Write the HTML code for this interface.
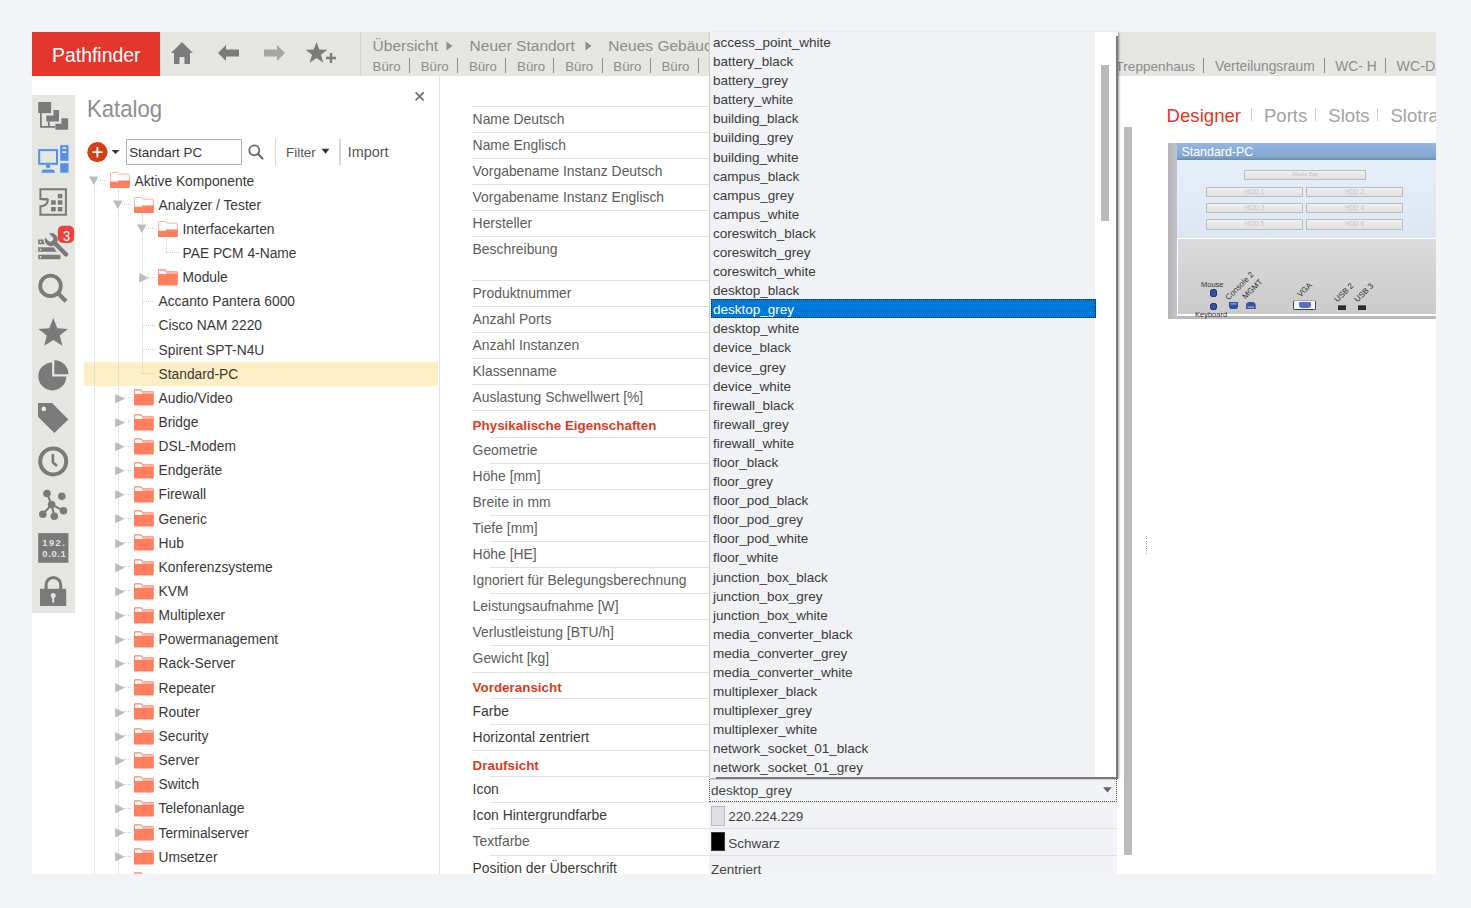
<!DOCTYPE html><html><head><meta charset="utf-8"><style>

html,body{margin:0;padding:0}
body{width:1471px;height:908px;overflow:hidden;position:relative;background:#f3f4f8;font-family:"Liberation Sans", sans-serif;}
.abs{position:absolute}
.t{position:absolute;white-space:nowrap;line-height:1}
svg{position:absolute;overflow:visible}

</style></head><body>
<div class="abs" style="left:32px;top:32px;width:1404px;height:842px;background:#fff;"></div>
<div class="abs" style="left:32px;top:32px;width:128px;height:44px;background:#e3362d;"></div>
<div class="abs" style="left:160px;top:32px;width:1276px;height:44px;background:#e5e5e1;"></div>
<div class="t" style="left:52.10px;top:46.00px;font-size:19.4px;color:#fff;font-weight:normal;">Pathfinder</div>
<svg style="left:170px;top:41px" width="24" height="24" viewBox="0 0 24 24"><path d="M12 1 L23 12 L20 12 L20 23 L14.5 23 L14.5 16 L9.5 16 L9.5 23 L4 23 L4 12 L1 12 Z" fill="#7b7b7b"/></svg>
<svg style="left:217px;top:44px" width="23" height="18" viewBox="0 0 23 18"><path d="M1 9 L9 1 L9 5.5 L22 5.5 L22 12.5 L9 12.5 L9 17 Z" fill="#7b7b7b"/></svg>
<svg style="left:263px;top:44px" width="23" height="18" viewBox="0 0 23 18"><path d="M22 9 L14 1 L14 5.5 L1 5.5 L1 12.5 L14 12.5 L14 17 Z" fill="#a5a5a5"/></svg>
<svg style="left:305px;top:41px" width="33" height="24" viewBox="0 0 33 24"><path d="M11.5 1 L14.3 8.6 L22.5 8.8 L16 13.8 L18.4 21.8 L11.5 17.1 L4.6 21.8 L7 13.8 L0.5 8.8 L8.7 8.6 Z" fill="#7b7b7b"/><path d="M26 12 V22 M21 17 H31" stroke="#7b7b7b" stroke-width="2.4"/></svg>
<div class="abs" style="left:360px;top:32px;width:1px;height:44px;background:#d2d2ce;"></div>
<div class="t" style="left:372.60px;top:38.00px;font-size:15.5px;color:#8c8c8c;font-weight:normal;">Übersicht</div>
<svg style="left:446px;top:41px" width="7" height="10" viewBox="0 0 7 10"><path d="M0.5 0.5 L6.5 5 L0.5 9.5Z" fill="#8c8c8c"/></svg>
<div class="t" style="left:469.60px;top:38.00px;font-size:15.5px;color:#8c8c8c;font-weight:normal;">Neuer Standort</div>
<svg style="left:585px;top:41px" width="7" height="10" viewBox="0 0 7 10"><path d="M0.5 0.5 L6.5 5 L0.5 9.5Z" fill="#8c8c8c"/></svg>
<div class="t" style="left:608.30px;top:38.00px;font-size:15.5px;color:#8c8c8c;font-weight:normal;">Neues Gebäude</div>
<div class="t" style="left:372.60px;top:60.00px;font-size:13.25px;color:#8c8c8c;font-weight:normal;">Büro</div>
<div class="abs" style="left:409px;top:58px;width:1px;height:15px;background:#8c8c8c;"></div>
<div class="t" style="left:420.75px;top:60.00px;font-size:13.25px;color:#8c8c8c;font-weight:normal;">Büro</div>
<div class="abs" style="left:457px;top:58px;width:1px;height:15px;background:#8c8c8c;"></div>
<div class="t" style="left:468.90px;top:60.00px;font-size:13.25px;color:#8c8c8c;font-weight:normal;">Büro</div>
<div class="abs" style="left:505px;top:58px;width:1px;height:15px;background:#8c8c8c;"></div>
<div class="t" style="left:517.05px;top:60.00px;font-size:13.25px;color:#8c8c8c;font-weight:normal;">Büro</div>
<div class="abs" style="left:553px;top:58px;width:1px;height:15px;background:#8c8c8c;"></div>
<div class="t" style="left:565.20px;top:60.00px;font-size:13.25px;color:#8c8c8c;font-weight:normal;">Büro</div>
<div class="abs" style="left:602px;top:58px;width:1px;height:15px;background:#8c8c8c;"></div>
<div class="t" style="left:613.35px;top:60.00px;font-size:13.25px;color:#8c8c8c;font-weight:normal;">Büro</div>
<div class="abs" style="left:650px;top:58px;width:1px;height:15px;background:#8c8c8c;"></div>
<div class="t" style="left:661.50px;top:60.00px;font-size:13.25px;color:#8c8c8c;font-weight:normal;">Büro</div>
<div class="abs" style="left:698px;top:58px;width:1px;height:15px;background:#8c8c8c;"></div>
<div class="abs" style="left:1118px;top:32px;width:318px;height:44px;overflow:hidden">

<div class="t" style="left:-2.50px;top:28.00px;font-size:13.6px;color:#8c8c8c">Treppenhaus</div>
<div class="abs" style="left:85px;top:26px;width:1px;height:15px;background:#8c8c8c"></div>
<div class="t" style="left:97.00px;top:28.00px;font-size:13.8px;color:#8c8c8c">Verteilungsraum</div>
<div class="abs" style="left:206px;top:26px;width:1px;height:15px;background:#8c8c8c"></div>
<div class="t" style="left:217.30px;top:28.00px;font-size:13.8px;color:#8c8c8c">WC- H</div>
<div class="abs" style="left:267px;top:26px;width:1px;height:15px;background:#8c8c8c"></div>
<div class="t" style="left:278.60px;top:27.00px;font-size:14.2px;color:#8c8c8c">WC-Damen</div>
</div>
<div class="abs" style="left:32px;top:95px;width:43px;height:518px;background:#e5e5e1;"></div>
<svg style="left:32px;top:95px" width="43" height="518" viewBox="32 95 43 518"><path d="M40.9 113 V126.9 H55.4 M48.8 121.4 V126.9" stroke="#7a7a7a" stroke-width="1.8" fill="none"/><rect x="38.2" y="102" width="12.9" height="11.1" fill="#7a7a7a"/><path d="M53.5 110.1 H59 V121.4 H46.3 V115.5 H53.5 Z" fill="#7a7a7a"/><path d="M61.4 118.2 H68.1 V129.7 H55.4 V123.8 H61.4 Z" fill="#7a7a7a"/><rect x="39.2" y="150.1" width="17.8" height="13.7" fill="none" stroke="#5490e6" stroke-width="2"/><rect x="46.1" y="164.8" width="4" height="3" fill="#5490e6"/><path d="M41.5 172.7 Q41.6 169.4 44.5 169.4 H51.8 Q54.7 169.4 54.8 172.7 Z" fill="#5490e6"/><rect x="60.2" y="145.2" width="8.3" height="15.6" fill="#5490e6"/><rect x="62.2" y="147.3" width="4.3" height="1.6" rx="0.8" fill="#e5e5e1"/><rect x="62.2" y="151.2" width="4.3" height="1.7" rx="0.8" fill="#e5e5e1"/><rect x="60.2" y="163.2" width="8.3" height="9.5" fill="#5490e6"/><path d="M40.4 199.1 V189.2 H65.9 V214.7 H40.4 V206.2 Q47.6 206.2 47.9 199.6 Z" fill="none" stroke="#7a7a7a" stroke-width="2"/><path d="M40.4 199.1 H47.9" stroke="#7a7a7a" stroke-width="2"/><rect x="57.8" y="193.9" width="4.6" height="4.4" fill="#7a7a7a"/><rect x="51.1" y="200.3" width="4.6" height="4.4" fill="#7a7a7a"/><rect x="57.8" y="200.3" width="4.6" height="4.4" fill="#7a7a7a"/><rect x="51.1" y="207" width="4.6" height="4.4" fill="#7a7a7a"/><rect x="57.8" y="207" width="4.6" height="4.4" fill="#7a7a7a"/><path d="M38.2 239.4 H43.3 L45 244.3 H38.2 Z" fill="#7a7a7a"/><path d="M38.2 247.3 H53.5 L56.8 251.8 H38.2 Z" fill="#7a7a7a"/><rect x="38.2" y="254.8" width="22.3" height="4.4" rx="1" fill="#7a7a7a"/><circle cx="40.6" cy="241.8" r="0.9" fill="#e5e5e1"/><circle cx="40.6" cy="249.6" r="0.9" fill="#e5e5e1"/><circle cx="40.6" cy="257" r="0.9" fill="#e5e5e1"/><g transform="translate(51.2 239.6) rotate(45)"><path d="M -5.85 -2.8 L -1.2 -2.8 A 2.8 2.8 0 0 1 -1.2 2.8 L -5.85 2.8 A 6.5 6.5 0 0 0 6.12 2.2 L 21 2.2 A 2.2 2.2 0 0 0 21 -2.2 L 6.12 -2.2 A 6.5 6.5 0 0 0 -5.85 -2.8 Z" fill="#7a7a7a" stroke="#e5e5e1" stroke-width="2.2"/><path d="M -5.85 -2.8 L -1.2 -2.8 A 2.8 2.8 0 0 1 -1.2 2.8 L -5.85 2.8 A 6.5 6.5 0 0 0 6.12 2.2 L 21 2.2 A 2.2 2.2 0 0 0 21 -2.2 L 6.12 -2.2 A 6.5 6.5 0 0 0 -5.85 -2.8 Z" fill="#7a7a7a"/></g><rect x="57.8" y="225.8" width="16.3" height="17.1" rx="5" fill="#e8433c"/><circle cx="50.5" cy="285.9" r="10.3" fill="none" stroke="#7a7a7a" stroke-width="3.8"/><path d="M58.5 293.8 L66 301.3" stroke="#7a7a7a" stroke-width="4.3"/><path d="M53.3 318 L57.4 328.2 L67.9 328.9 L59.8 335.5 L62.4 345.8 L53.3 340 L44.2 345.8 L46.8 335.5 L38.4 328.9 L49.2 328.2 Z" fill="#7a7a7a"/><path d="M52.1 362.4 A14 14 0 1 0 66.3 376.4 H52.1 Z" fill="#7a7a7a"/><path d="M54.3 360.2 A14.1 14.1 0 0 1 68.4 374.3 H54.3 Z" fill="#7a7a7a"/><path d="M38 403.1 H52 L68.4 419.4 L54.3 433.1 L38 416.8 Z" fill="#7a7a7a"/><circle cx="43.8" cy="408.9" r="2.3" fill="#e5e5e1"/><circle cx="53.2" cy="461.4" r="13" fill="none" stroke="#7a7a7a" stroke-width="4"/><path d="M52.9 454 V462.6 L57 466" fill="none" stroke="#7a7a7a" stroke-width="2.6"/><path d="M47 493.5 L51.6 504.6 L42.8 514.2 M51.6 504.6 L54.3 516 M51.6 504.6 L63.5 510.7" stroke="#7a7a7a" stroke-width="2" fill="none"/><circle cx="47" cy="493.5" r="3.8" fill="#7a7a7a"/><circle cx="61.8" cy="496.2" r="3.8" fill="#7a7a7a"/><circle cx="51.6" cy="504.6" r="3.8" fill="#7a7a7a"/><circle cx="42.8" cy="514.2" r="3.8" fill="#7a7a7a"/><circle cx="54.3" cy="516.2" r="3.8" fill="#7a7a7a"/><circle cx="63.5" cy="510.7" r="3.8" fill="#7a7a7a"/><rect x="38.2" y="533.1" width="30.2" height="29.7" fill="#7a7a7a"/><path d="M46.1 589 V584.8 A7.3 7.3 0 0 1 60.7 584.8 V589" fill="none" stroke="#7a7a7a" stroke-width="3"/><rect x="40" y="588.8" width="26.2" height="17.2" fill="#7a7a7a"/><circle cx="53.2" cy="595.6" r="2.5" fill="#e5e5e1"/><path d="M53.2 596 V602.6" stroke="#e5e5e1" stroke-width="2"/></svg>
<div class="t" style="left:62.60px;top:229.00px;font-size:14.2px;color:#fff;font-weight:normal;transform:scaleX(0.9);transform-origin:0 0">3</div>
<div class="t" style="left:42.30px;top:538.00px;font-size:9.4px;color:#e2e2e0;font-weight:bold;letter-spacing:1.45px">192.</div>
<div class="t" style="left:42.30px;top:549.00px;font-size:9.4px;color:#e2e2e0;font-weight:bold;letter-spacing:0.65px">0.0.1</div>
<div class="t" style="left:86.90px;top:97.00px;font-size:24.3px;color:#8e8e8e;font-weight:normal;transform:scaleX(0.912);transform-origin:0 0">Katalog</div>
<svg style="left:414px;top:91px" width="11" height="11" viewBox="0 0 11 11"><path d="M1.6 1.4 L9.6 9.4 M9.6 1.4 L1.6 9.4" stroke="#707070" stroke-width="1.7"/></svg>
<svg style="left:87px;top:142px" width="21" height="21" viewBox="0 0 21 21"><circle cx="10.4" cy="10.2" r="10.1" fill="#d83e12"/><path d="M10.4 5 V15.4 M5.2 10.2 H15.6" stroke="#fff" stroke-width="1.8"/></svg>
<svg style="left:111px;top:149px" width="9" height="6" viewBox="0 0 9 6"><path d="M0.5 1 H8.5 L4.5 5Z" fill="#333"/></svg>
<div class="abs" style="left:126px;top:139px;width:114px;height:24px;border:1px solid #b0b0b0;background:#fff"></div>
<div class="t" style="left:129.20px;top:146.00px;font-size:13.4px;color:#333;font-weight:normal;">Standart PC</div>
<svg style="left:248px;top:144px" width="16" height="16" viewBox="0 0 16 16"><circle cx="6.3" cy="6.3" r="5" fill="none" stroke="#6a6a6a" stroke-width="1.8"/><path d="M10 10 L14.5 14.5" stroke="#6a6a6a" stroke-width="2.2" stroke-linecap="round"/></svg>
<div class="abs" style="left:274.5px;top:139px;width:1.5px;height:26px;background:#d6d6d6;"></div>
<div class="t" style="left:286.00px;top:146.00px;font-size:13.4px;color:#555;font-weight:normal;">Filter</div>
<svg style="left:321px;top:148px" width="9" height="7" viewBox="0 0 9 7"><path d="M0.5 0.8 H8.5 L4.5 5.8Z" fill="#333"/></svg>
<div class="abs" style="left:339px;top:139px;width:1.5px;height:26px;background:#d6d6d6;"></div>
<div class="t" style="left:347.80px;top:145.00px;font-size:14.4px;color:#555;font-weight:normal;">Import</div>
<div class="abs" style="left:439px;top:76px;width:1px;height:798px;background:#e2e3e8;"></div>
<div class="abs" style="left:75px;top:168px;width:364px;height:706px;overflow:hidden">
<div class="abs" style="left:8.599999999999994px;top:194px;width:354.6px;height:24px;background:#fdeec3"></div>
<div class="abs" style="left:19.0px;top:17.0px;width:0;height:715.0px;border-left:1px dotted #cecece"></div>
<div class="abs" style="left:43.0px;top:22.0px;width:0;height:710.0px;border-left:1px dotted #cecece"></div>
<div class="abs" style="left:67.0px;top:46.0px;width:0;height:160.0px;border-left:1px dotted #cecece"></div>
<div class="abs" style="left:91.0px;top:71.0px;width:0;height:14.0px;border-left:1px dotted #cecece"></div>
<svg style="left:14.2px;top:8.0px" width="10" height="10" viewBox="0 0 10 10"><path d="M0 0.5 H9.6 L4.8 9.3Z" fill="#bdbdbd"/></svg>
<div class="abs" style="left:23.0px;top:12.0px;width:9.0px;height:0;border-top:1px dotted #cecece"></div>
<svg style="left:35.00px;top:4.40px" width="20" height="17" viewBox="0 0 20 17"><path d="M0.5 1.3 Q0.5 0.5 1.3 0.5 H7.4 L9 2.1 H18.5 Q19.3 2.1 19.3 2.9 V14 H0.5 Z" fill="#fff" stroke="#ffae99" stroke-width="1"/><path d="M0 9.8 H7.6 L8.4 8.6 H19.8 V14.9 Q19.8 16.1 18.6 16.1 H1.2 Q0 16.1 0 14.9 Z" fill="#ff7e5d"/></svg>
<div class="t" style="left:59.5px;top:7.00px;font-size:13.8px;color:#383838">Aktive Komponente</div>
<svg style="left:38.2px;top:32.2px" width="10" height="10" viewBox="0 0 10 10"><path d="M0 0.5 H9.6 L4.8 9.3Z" fill="#bdbdbd"/></svg>
<div class="abs" style="left:47.0px;top:36.0px;width:9.0px;height:0;border-top:1px dotted #cecece"></div>
<svg style="left:59.00px;top:28.55px" width="20" height="17" viewBox="0 0 20 17"><path d="M0.5 1.3 Q0.5 0.5 1.3 0.5 H7.4 L9 2.1 H18.5 Q19.3 2.1 19.3 2.9 V14 H0.5 Z" fill="#fff" stroke="#ffae99" stroke-width="1"/><path d="M0 9.8 H7.6 L8.4 8.6 H19.8 V14.9 Q19.8 16.1 18.6 16.1 H1.2 Q0 16.1 0 14.9 Z" fill="#ff7e5d"/></svg>
<div class="t" style="left:83.5px;top:31.00px;font-size:13.8px;color:#383838">Analyzer / Tester</div>
<svg style="left:62.2px;top:56.3px" width="10" height="10" viewBox="0 0 10 10"><path d="M0 0.5 H9.6 L4.8 9.3Z" fill="#bdbdbd"/></svg>
<div class="abs" style="left:71.0px;top:60.0px;width:9.0px;height:0;border-top:1px dotted #cecece"></div>
<svg style="left:83.00px;top:52.70px" width="20" height="17" viewBox="0 0 20 17"><path d="M0.5 1.3 Q0.5 0.5 1.3 0.5 H7.4 L9 2.1 H18.5 Q19.3 2.1 19.3 2.9 V14 H0.5 Z" fill="#fff" stroke="#ffae99" stroke-width="1"/><path d="M0 9.8 H7.6 L8.4 8.6 H19.8 V14.9 Q19.8 16.1 18.6 16.1 H1.2 Q0 16.1 0 14.9 Z" fill="#ff7e5d"/></svg>
<div class="t" style="left:107.5px;top:55.00px;font-size:13.8px;color:#383838">Interfacekarten</div>
<div class="abs" style="left:92.0px;top:84.0px;width:12.0px;height:0;border-top:1px dotted #cecece"></div>
<div class="t" style="left:107.5px;top:79.00px;font-size:13.8px;color:#383838">PAE PCM 4-Name</div>
<svg style="left:63.5px;top:104.8px" width="11" height="10" viewBox="0 0 11 10"><path d="M0.2 0 L9.7 4.7 L0.2 9.4Z" fill="#bdbdbd"/></svg>
<div class="abs" style="left:72.0px;top:109.0px;width:8.0px;height:0;border-top:1px dotted #cecece"></div>
<svg style="left:83.00px;top:100.70px" width="20" height="17" viewBox="0 0 20 17"><path d="M0 1.2 Q0 0.2 1 0.2 H6.8 L9 2.3 H18.8 Q19.8 2.3 19.8 3.3 V15.3 Q19.8 16.5 18.6 16.5 H1.2 Q0 16.5 0 15.3 Z" fill="#ff7e5d"/><path d="M0.9 1.4 H6.6 L8 2.8 V5 H0.9 Z" fill="#fff"/><rect x="8" y="2.6" width="11" height="2.2" fill="#ffbba8"/></svg>
<div class="t" style="left:107.5px;top:103.00px;font-size:13.8px;color:#383838">Module</div>
<div class="abs" style="left:68.0px;top:133.0px;width:12.0px;height:0;border-top:1px dotted #cecece"></div>
<div class="t" style="left:83.5px;top:127.00px;font-size:13.8px;color:#383838">Accanto Pantera 6000</div>
<div class="abs" style="left:68.0px;top:157.0px;width:12.0px;height:0;border-top:1px dotted #cecece"></div>
<div class="t" style="left:83.5px;top:151.00px;font-size:13.8px;color:#383838">Cisco NAM 2220</div>
<div class="abs" style="left:68.0px;top:181.0px;width:12.0px;height:0;border-top:1px dotted #cecece"></div>
<div class="t" style="left:83.5px;top:176.00px;font-size:13.8px;color:#383838">Spirent SPT-N4U</div>
<div class="abs" style="left:68.0px;top:205.0px;width:12.0px;height:0;border-top:1px dotted #cecece"></div>
<div class="t" style="left:83.5px;top:200.00px;font-size:13.8px;color:#383838">Standard-PC</div>
<svg style="left:39.5px;top:225.6px" width="11" height="10" viewBox="0 0 11 10"><path d="M0.2 0 L9.7 4.7 L0.2 9.4Z" fill="#bdbdbd"/></svg>
<div class="abs" style="left:48.0px;top:229.0px;width:8.0px;height:0;border-top:1px dotted #cecece"></div>
<svg style="left:59.00px;top:221.45px" width="20" height="17" viewBox="0 0 20 17"><path d="M0 1.2 Q0 0.2 1 0.2 H6.8 L9 2.3 H18.8 Q19.8 2.3 19.8 3.3 V15.3 Q19.8 16.5 18.6 16.5 H1.2 Q0 16.5 0 15.3 Z" fill="#ff7e5d"/><path d="M0.9 1.4 H6.6 L8 2.8 V5 H0.9 Z" fill="#fff"/><rect x="8" y="2.6" width="11" height="2.2" fill="#ffbba8"/></svg>
<div class="t" style="left:83.5px;top:224.00px;font-size:13.8px;color:#383838">Audio/Video</div>
<svg style="left:39.5px;top:249.7px" width="11" height="10" viewBox="0 0 11 10"><path d="M0.2 0 L9.7 4.7 L0.2 9.4Z" fill="#bdbdbd"/></svg>
<div class="abs" style="left:48.0px;top:253.0px;width:8.0px;height:0;border-top:1px dotted #cecece"></div>
<svg style="left:59.00px;top:245.60px" width="20" height="17" viewBox="0 0 20 17"><path d="M0 1.2 Q0 0.2 1 0.2 H6.8 L9 2.3 H18.8 Q19.8 2.3 19.8 3.3 V15.3 Q19.8 16.5 18.6 16.5 H1.2 Q0 16.5 0 15.3 Z" fill="#ff7e5d"/><path d="M0.9 1.4 H6.6 L8 2.8 V5 H0.9 Z" fill="#fff"/><rect x="8" y="2.6" width="11" height="2.2" fill="#ffbba8"/></svg>
<div class="t" style="left:83.5px;top:248.00px;font-size:13.8px;color:#383838">Bridge</div>
<svg style="left:39.5px;top:273.8px" width="11" height="10" viewBox="0 0 11 10"><path d="M0.2 0 L9.7 4.7 L0.2 9.4Z" fill="#bdbdbd"/></svg>
<div class="abs" style="left:48.0px;top:278.0px;width:8.0px;height:0;border-top:1px dotted #cecece"></div>
<svg style="left:59.00px;top:269.75px" width="20" height="17" viewBox="0 0 20 17"><path d="M0 1.2 Q0 0.2 1 0.2 H6.8 L9 2.3 H18.8 Q19.8 2.3 19.8 3.3 V15.3 Q19.8 16.5 18.6 16.5 H1.2 Q0 16.5 0 15.3 Z" fill="#ff7e5d"/><path d="M0.9 1.4 H6.6 L8 2.8 V5 H0.9 Z" fill="#fff"/><rect x="8" y="2.6" width="11" height="2.2" fill="#ffbba8"/></svg>
<div class="t" style="left:83.5px;top:272.00px;font-size:13.8px;color:#383838">DSL-Modem</div>
<svg style="left:39.5px;top:298.0px" width="11" height="10" viewBox="0 0 11 10"><path d="M0.2 0 L9.7 4.7 L0.2 9.4Z" fill="#bdbdbd"/></svg>
<div class="abs" style="left:48.0px;top:302.0px;width:8.0px;height:0;border-top:1px dotted #cecece"></div>
<svg style="left:59.00px;top:293.90px" width="20" height="17" viewBox="0 0 20 17"><path d="M0 1.2 Q0 0.2 1 0.2 H6.8 L9 2.3 H18.8 Q19.8 2.3 19.8 3.3 V15.3 Q19.8 16.5 18.6 16.5 H1.2 Q0 16.5 0 15.3 Z" fill="#ff7e5d"/><path d="M0.9 1.4 H6.6 L8 2.8 V5 H0.9 Z" fill="#fff"/><rect x="8" y="2.6" width="11" height="2.2" fill="#ffbba8"/></svg>
<div class="t" style="left:83.5px;top:296.00px;font-size:13.8px;color:#383838">Endgeräte</div>
<svg style="left:39.5px;top:322.1px" width="11" height="10" viewBox="0 0 11 10"><path d="M0.2 0 L9.7 4.7 L0.2 9.4Z" fill="#bdbdbd"/></svg>
<div class="abs" style="left:48.0px;top:326.0px;width:8.0px;height:0;border-top:1px dotted #cecece"></div>
<svg style="left:59.00px;top:318.05px" width="20" height="17" viewBox="0 0 20 17"><path d="M0 1.2 Q0 0.2 1 0.2 H6.8 L9 2.3 H18.8 Q19.8 2.3 19.8 3.3 V15.3 Q19.8 16.5 18.6 16.5 H1.2 Q0 16.5 0 15.3 Z" fill="#ff7e5d"/><path d="M0.9 1.4 H6.6 L8 2.8 V5 H0.9 Z" fill="#fff"/><rect x="8" y="2.6" width="11" height="2.2" fill="#ffbba8"/></svg>
<div class="t" style="left:83.5px;top:320.00px;font-size:13.8px;color:#383838">Firewall</div>
<svg style="left:39.5px;top:346.3px" width="11" height="10" viewBox="0 0 11 10"><path d="M0.2 0 L9.7 4.7 L0.2 9.4Z" fill="#bdbdbd"/></svg>
<div class="abs" style="left:48.0px;top:350.0px;width:8.0px;height:0;border-top:1px dotted #cecece"></div>
<svg style="left:59.00px;top:342.20px" width="20" height="17" viewBox="0 0 20 17"><path d="M0 1.2 Q0 0.2 1 0.2 H6.8 L9 2.3 H18.8 Q19.8 2.3 19.8 3.3 V15.3 Q19.8 16.5 18.6 16.5 H1.2 Q0 16.5 0 15.3 Z" fill="#ff7e5d"/><path d="M0.9 1.4 H6.6 L8 2.8 V5 H0.9 Z" fill="#fff"/><rect x="8" y="2.6" width="11" height="2.2" fill="#ffbba8"/></svg>
<div class="t" style="left:83.5px;top:345.00px;font-size:13.8px;color:#383838">Generic</div>
<svg style="left:39.5px;top:370.5px" width="11" height="10" viewBox="0 0 11 10"><path d="M0.2 0 L9.7 4.7 L0.2 9.4Z" fill="#bdbdbd"/></svg>
<div class="abs" style="left:48.0px;top:374.0px;width:8.0px;height:0;border-top:1px dotted #cecece"></div>
<svg style="left:59.00px;top:366.35px" width="20" height="17" viewBox="0 0 20 17"><path d="M0 1.2 Q0 0.2 1 0.2 H6.8 L9 2.3 H18.8 Q19.8 2.3 19.8 3.3 V15.3 Q19.8 16.5 18.6 16.5 H1.2 Q0 16.5 0 15.3 Z" fill="#ff7e5d"/><path d="M0.9 1.4 H6.6 L8 2.8 V5 H0.9 Z" fill="#fff"/><rect x="8" y="2.6" width="11" height="2.2" fill="#ffbba8"/></svg>
<div class="t" style="left:83.5px;top:369.00px;font-size:13.8px;color:#383838">Hub</div>
<svg style="left:39.5px;top:394.6px" width="11" height="10" viewBox="0 0 11 10"><path d="M0.2 0 L9.7 4.7 L0.2 9.4Z" fill="#bdbdbd"/></svg>
<div class="abs" style="left:48.0px;top:398.0px;width:8.0px;height:0;border-top:1px dotted #cecece"></div>
<svg style="left:59.00px;top:390.50px" width="20" height="17" viewBox="0 0 20 17"><path d="M0 1.2 Q0 0.2 1 0.2 H6.8 L9 2.3 H18.8 Q19.8 2.3 19.8 3.3 V15.3 Q19.8 16.5 18.6 16.5 H1.2 Q0 16.5 0 15.3 Z" fill="#ff7e5d"/><path d="M0.9 1.4 H6.6 L8 2.8 V5 H0.9 Z" fill="#fff"/><rect x="8" y="2.6" width="11" height="2.2" fill="#ffbba8"/></svg>
<div class="t" style="left:83.5px;top:393.00px;font-size:13.8px;color:#383838">Konferenzsysteme</div>
<svg style="left:39.5px;top:418.8px" width="11" height="10" viewBox="0 0 11 10"><path d="M0.2 0 L9.7 4.7 L0.2 9.4Z" fill="#bdbdbd"/></svg>
<div class="abs" style="left:48.0px;top:422.0px;width:8.0px;height:0;border-top:1px dotted #cecece"></div>
<svg style="left:59.00px;top:414.65px" width="20" height="17" viewBox="0 0 20 17"><path d="M0 1.2 Q0 0.2 1 0.2 H6.8 L9 2.3 H18.8 Q19.8 2.3 19.8 3.3 V15.3 Q19.8 16.5 18.6 16.5 H1.2 Q0 16.5 0 15.3 Z" fill="#ff7e5d"/><path d="M0.9 1.4 H6.6 L8 2.8 V5 H0.9 Z" fill="#fff"/><rect x="8" y="2.6" width="11" height="2.2" fill="#ffbba8"/></svg>
<div class="t" style="left:83.5px;top:417.00px;font-size:13.8px;color:#383838">KVM</div>
<svg style="left:39.5px;top:442.9px" width="11" height="10" viewBox="0 0 11 10"><path d="M0.2 0 L9.7 4.7 L0.2 9.4Z" fill="#bdbdbd"/></svg>
<div class="abs" style="left:48.0px;top:447.0px;width:8.0px;height:0;border-top:1px dotted #cecece"></div>
<svg style="left:59.00px;top:438.80px" width="20" height="17" viewBox="0 0 20 17"><path d="M0 1.2 Q0 0.2 1 0.2 H6.8 L9 2.3 H18.8 Q19.8 2.3 19.8 3.3 V15.3 Q19.8 16.5 18.6 16.5 H1.2 Q0 16.5 0 15.3 Z" fill="#ff7e5d"/><path d="M0.9 1.4 H6.6 L8 2.8 V5 H0.9 Z" fill="#fff"/><rect x="8" y="2.6" width="11" height="2.2" fill="#ffbba8"/></svg>
<div class="t" style="left:83.5px;top:441.00px;font-size:13.8px;color:#383838">Multiplexer</div>
<svg style="left:39.5px;top:467.0px" width="11" height="10" viewBox="0 0 11 10"><path d="M0.2 0 L9.7 4.7 L0.2 9.4Z" fill="#bdbdbd"/></svg>
<div class="abs" style="left:48.0px;top:471.0px;width:8.0px;height:0;border-top:1px dotted #cecece"></div>
<svg style="left:59.00px;top:462.95px" width="20" height="17" viewBox="0 0 20 17"><path d="M0 1.2 Q0 0.2 1 0.2 H6.8 L9 2.3 H18.8 Q19.8 2.3 19.8 3.3 V15.3 Q19.8 16.5 18.6 16.5 H1.2 Q0 16.5 0 15.3 Z" fill="#ff7e5d"/><path d="M0.9 1.4 H6.6 L8 2.8 V5 H0.9 Z" fill="#fff"/><rect x="8" y="2.6" width="11" height="2.2" fill="#ffbba8"/></svg>
<div class="t" style="left:83.5px;top:465.00px;font-size:13.8px;color:#383838">Powermanagement</div>
<svg style="left:39.5px;top:491.2px" width="11" height="10" viewBox="0 0 11 10"><path d="M0.2 0 L9.7 4.7 L0.2 9.4Z" fill="#bdbdbd"/></svg>
<div class="abs" style="left:48.0px;top:495.0px;width:8.0px;height:0;border-top:1px dotted #cecece"></div>
<svg style="left:59.00px;top:487.10px" width="20" height="17" viewBox="0 0 20 17"><path d="M0 1.2 Q0 0.2 1 0.2 H6.8 L9 2.3 H18.8 Q19.8 2.3 19.8 3.3 V15.3 Q19.8 16.5 18.6 16.5 H1.2 Q0 16.5 0 15.3 Z" fill="#ff7e5d"/><path d="M0.9 1.4 H6.6 L8 2.8 V5 H0.9 Z" fill="#fff"/><rect x="8" y="2.6" width="11" height="2.2" fill="#ffbba8"/></svg>
<div class="t" style="left:83.5px;top:489.00px;font-size:13.8px;color:#383838">Rack-Server</div>
<svg style="left:39.5px;top:515.4px" width="11" height="10" viewBox="0 0 11 10"><path d="M0.2 0 L9.7 4.7 L0.2 9.4Z" fill="#bdbdbd"/></svg>
<div class="abs" style="left:48.0px;top:519.0px;width:8.0px;height:0;border-top:1px dotted #cecece"></div>
<svg style="left:59.00px;top:511.25px" width="20" height="17" viewBox="0 0 20 17"><path d="M0 1.2 Q0 0.2 1 0.2 H6.8 L9 2.3 H18.8 Q19.8 2.3 19.8 3.3 V15.3 Q19.8 16.5 18.6 16.5 H1.2 Q0 16.5 0 15.3 Z" fill="#ff7e5d"/><path d="M0.9 1.4 H6.6 L8 2.8 V5 H0.9 Z" fill="#fff"/><rect x="8" y="2.6" width="11" height="2.2" fill="#ffbba8"/></svg>
<div class="t" style="left:83.5px;top:514.00px;font-size:13.8px;color:#383838">Repeater</div>
<svg style="left:39.5px;top:539.5px" width="11" height="10" viewBox="0 0 11 10"><path d="M0.2 0 L9.7 4.7 L0.2 9.4Z" fill="#bdbdbd"/></svg>
<div class="abs" style="left:48.0px;top:543.0px;width:8.0px;height:0;border-top:1px dotted #cecece"></div>
<svg style="left:59.00px;top:535.40px" width="20" height="17" viewBox="0 0 20 17"><path d="M0 1.2 Q0 0.2 1 0.2 H6.8 L9 2.3 H18.8 Q19.8 2.3 19.8 3.3 V15.3 Q19.8 16.5 18.6 16.5 H1.2 Q0 16.5 0 15.3 Z" fill="#ff7e5d"/><path d="M0.9 1.4 H6.6 L8 2.8 V5 H0.9 Z" fill="#fff"/><rect x="8" y="2.6" width="11" height="2.2" fill="#ffbba8"/></svg>
<div class="t" style="left:83.5px;top:538.00px;font-size:13.8px;color:#383838">Router</div>
<svg style="left:39.5px;top:563.6px" width="11" height="10" viewBox="0 0 11 10"><path d="M0.2 0 L9.7 4.7 L0.2 9.4Z" fill="#bdbdbd"/></svg>
<div class="abs" style="left:48.0px;top:567.0px;width:8.0px;height:0;border-top:1px dotted #cecece"></div>
<svg style="left:59.00px;top:559.55px" width="20" height="17" viewBox="0 0 20 17"><path d="M0 1.2 Q0 0.2 1 0.2 H6.8 L9 2.3 H18.8 Q19.8 2.3 19.8 3.3 V15.3 Q19.8 16.5 18.6 16.5 H1.2 Q0 16.5 0 15.3 Z" fill="#ff7e5d"/><path d="M0.9 1.4 H6.6 L8 2.8 V5 H0.9 Z" fill="#fff"/><rect x="8" y="2.6" width="11" height="2.2" fill="#ffbba8"/></svg>
<div class="t" style="left:83.5px;top:562.00px;font-size:13.8px;color:#383838">Security</div>
<svg style="left:39.5px;top:587.8px" width="11" height="10" viewBox="0 0 11 10"><path d="M0.2 0 L9.7 4.7 L0.2 9.4Z" fill="#bdbdbd"/></svg>
<div class="abs" style="left:48.0px;top:591.0px;width:8.0px;height:0;border-top:1px dotted #cecece"></div>
<svg style="left:59.00px;top:583.70px" width="20" height="17" viewBox="0 0 20 17"><path d="M0 1.2 Q0 0.2 1 0.2 H6.8 L9 2.3 H18.8 Q19.8 2.3 19.8 3.3 V15.3 Q19.8 16.5 18.6 16.5 H1.2 Q0 16.5 0 15.3 Z" fill="#ff7e5d"/><path d="M0.9 1.4 H6.6 L8 2.8 V5 H0.9 Z" fill="#fff"/><rect x="8" y="2.6" width="11" height="2.2" fill="#ffbba8"/></svg>
<div class="t" style="left:83.5px;top:586.00px;font-size:13.8px;color:#383838">Server</div>
<svg style="left:39.5px;top:612.0px" width="11" height="10" viewBox="0 0 11 10"><path d="M0.2 0 L9.7 4.7 L0.2 9.4Z" fill="#bdbdbd"/></svg>
<div class="abs" style="left:48.0px;top:616.0px;width:8.0px;height:0;border-top:1px dotted #cecece"></div>
<svg style="left:59.00px;top:607.85px" width="20" height="17" viewBox="0 0 20 17"><path d="M0 1.2 Q0 0.2 1 0.2 H6.8 L9 2.3 H18.8 Q19.8 2.3 19.8 3.3 V15.3 Q19.8 16.5 18.6 16.5 H1.2 Q0 16.5 0 15.3 Z" fill="#ff7e5d"/><path d="M0.9 1.4 H6.6 L8 2.8 V5 H0.9 Z" fill="#fff"/><rect x="8" y="2.6" width="11" height="2.2" fill="#ffbba8"/></svg>
<div class="t" style="left:83.5px;top:610.00px;font-size:13.8px;color:#383838">Switch</div>
<svg style="left:39.5px;top:636.1px" width="11" height="10" viewBox="0 0 11 10"><path d="M0.2 0 L9.7 4.7 L0.2 9.4Z" fill="#bdbdbd"/></svg>
<div class="abs" style="left:48.0px;top:640.0px;width:8.0px;height:0;border-top:1px dotted #cecece"></div>
<svg style="left:59.00px;top:632.00px" width="20" height="17" viewBox="0 0 20 17"><path d="M0 1.2 Q0 0.2 1 0.2 H6.8 L9 2.3 H18.8 Q19.8 2.3 19.8 3.3 V15.3 Q19.8 16.5 18.6 16.5 H1.2 Q0 16.5 0 15.3 Z" fill="#ff7e5d"/><path d="M0.9 1.4 H6.6 L8 2.8 V5 H0.9 Z" fill="#fff"/><rect x="8" y="2.6" width="11" height="2.2" fill="#ffbba8"/></svg>
<div class="t" style="left:83.5px;top:634.00px;font-size:13.8px;color:#383838">Telefonanlage</div>
<svg style="left:39.5px;top:660.2px" width="11" height="10" viewBox="0 0 11 10"><path d="M0.2 0 L9.7 4.7 L0.2 9.4Z" fill="#bdbdbd"/></svg>
<div class="abs" style="left:48.0px;top:664.0px;width:8.0px;height:0;border-top:1px dotted #cecece"></div>
<svg style="left:59.00px;top:656.15px" width="20" height="17" viewBox="0 0 20 17"><path d="M0 1.2 Q0 0.2 1 0.2 H6.8 L9 2.3 H18.8 Q19.8 2.3 19.8 3.3 V15.3 Q19.8 16.5 18.6 16.5 H1.2 Q0 16.5 0 15.3 Z" fill="#ff7e5d"/><path d="M0.9 1.4 H6.6 L8 2.8 V5 H0.9 Z" fill="#fff"/><rect x="8" y="2.6" width="11" height="2.2" fill="#ffbba8"/></svg>
<div class="t" style="left:83.5px;top:659.00px;font-size:13.8px;color:#383838">Terminalserver</div>
<svg style="left:39.5px;top:684.4px" width="11" height="10" viewBox="0 0 11 10"><path d="M0.2 0 L9.7 4.7 L0.2 9.4Z" fill="#bdbdbd"/></svg>
<div class="abs" style="left:48.0px;top:688.0px;width:8.0px;height:0;border-top:1px dotted #cecece"></div>
<svg style="left:59.00px;top:680.30px" width="20" height="17" viewBox="0 0 20 17"><path d="M0 1.2 Q0 0.2 1 0.2 H6.8 L9 2.3 H18.8 Q19.8 2.3 19.8 3.3 V15.3 Q19.8 16.5 18.6 16.5 H1.2 Q0 16.5 0 15.3 Z" fill="#ff7e5d"/><path d="M0.9 1.4 H6.6 L8 2.8 V5 H0.9 Z" fill="#fff"/><rect x="8" y="2.6" width="11" height="2.2" fill="#ffbba8"/></svg>
<div class="t" style="left:83.5px;top:683.00px;font-size:13.8px;color:#383838">Umsetzer</div>
<svg style="left:39.5px;top:708.5px" width="11" height="10" viewBox="0 0 11 10"><path d="M0.2 0 L9.7 4.7 L0.2 9.4Z" fill="#bdbdbd"/></svg>
<div class="abs" style="left:48.0px;top:712.0px;width:8.0px;height:0;border-top:1px dotted #cecece"></div>
<svg style="left:59.00px;top:704.45px" width="20" height="17" viewBox="0 0 20 17"><path d="M0 1.2 Q0 0.2 1 0.2 H6.8 L9 2.3 H18.8 Q19.8 2.3 19.8 3.3 V15.3 Q19.8 16.5 18.6 16.5 H1.2 Q0 16.5 0 15.3 Z" fill="#ff7e5d"/><path d="M0.9 1.4 H6.6 L8 2.8 V5 H0.9 Z" fill="#fff"/><rect x="8" y="2.6" width="11" height="2.2" fill="#ffbba8"/></svg>
<div class="t" style="left:83.5px;top:707.00px;font-size:13.8px;color:#383838">Verteiler</div>
</div>
<div class="abs" style="left:709px;top:106px;width:408px;height:768px;background:#f2f3f7;"></div>
<div class="abs" style="left:472px;top:106px;width:645px;height:1px;background:#e1e1e1"></div>
<div class="t" style="left:472.60px;top:113.00px;font-size:13.9px;color:#5c5c5c;font-weight:normal;">Name Deutsch</div>
<div class="abs" style="left:472px;top:132px;width:645px;height:1px;background:#e1e1e1"></div>
<div class="t" style="left:472.60px;top:139.00px;font-size:13.9px;color:#5c5c5c;font-weight:normal;">Name Englisch</div>
<div class="abs" style="left:472px;top:158px;width:645px;height:1px;background:#e1e1e1"></div>
<div class="t" style="left:472.60px;top:165.00px;font-size:13.9px;color:#5c5c5c;font-weight:normal;">Vorgabename Instanz Deutsch</div>
<div class="abs" style="left:472px;top:184px;width:645px;height:1px;background:#e1e1e1"></div>
<div class="t" style="left:472.60px;top:191.00px;font-size:13.9px;color:#5c5c5c;font-weight:normal;">Vorgabename Instanz Englisch</div>
<div class="abs" style="left:472px;top:210px;width:645px;height:1px;background:#e1e1e1"></div>
<div class="t" style="left:472.60px;top:217.00px;font-size:13.9px;color:#5c5c5c;font-weight:normal;">Hersteller</div>
<div class="abs" style="left:472px;top:236px;width:645px;height:1px;background:#e1e1e1"></div>
<div class="t" style="left:472.60px;top:243.00px;font-size:13.9px;color:#5c5c5c;font-weight:normal;">Beschreibung</div>
<div class="abs" style="left:472px;top:280px;width:645px;height:1px;background:#e1e1e1"></div>
<div class="t" style="left:472.60px;top:287.00px;font-size:13.9px;color:#5c5c5c;font-weight:normal;">Produktnummer</div>
<div class="abs" style="left:472px;top:306px;width:645px;height:1px;background:#e1e1e1"></div>
<div class="t" style="left:472.60px;top:313.00px;font-size:13.9px;color:#5c5c5c;font-weight:normal;">Anzahl Ports</div>
<div class="abs" style="left:472px;top:332px;width:645px;height:1px;background:#e1e1e1"></div>
<div class="t" style="left:472.60px;top:339.00px;font-size:13.9px;color:#5c5c5c;font-weight:normal;">Anzahl Instanzen</div>
<div class="abs" style="left:472px;top:358px;width:645px;height:1px;background:#e1e1e1"></div>
<div class="t" style="left:472.60px;top:365.00px;font-size:13.9px;color:#5c5c5c;font-weight:normal;">Klassenname</div>
<div class="abs" style="left:472px;top:384px;width:645px;height:1px;background:#e1e1e1"></div>
<div class="t" style="left:472.60px;top:391.00px;font-size:13.9px;color:#5c5c5c;font-weight:normal;">Auslastung Schwellwert [%]</div>
<div class="abs" style="left:472px;top:410px;width:645px;height:1px;background:#e1e1e1"></div>
<div class="t" style="left:472.60px;top:419.00px;font-size:13.4px;color:#d93c1d;font-weight:bold;">Physikalische Eigenschaften</div>
<div class="abs" style="left:489.5px;top:437px;width:627.5px;height:1px;background:#e1e1e1"></div>
<div class="t" style="left:472.60px;top:444.00px;font-size:13.9px;color:#5c5c5c;font-weight:normal;">Geometrie</div>
<div class="abs" style="left:489.5px;top:463px;width:627.5px;height:1px;background:#e1e1e1"></div>
<div class="t" style="left:472.60px;top:470.00px;font-size:13.9px;color:#5c5c5c;font-weight:normal;">Höhe [mm]</div>
<div class="abs" style="left:489.5px;top:489px;width:627.5px;height:1px;background:#e1e1e1"></div>
<div class="t" style="left:472.60px;top:496.00px;font-size:13.9px;color:#5c5c5c;font-weight:normal;">Breite in mm</div>
<div class="abs" style="left:489.5px;top:515px;width:627.5px;height:1px;background:#e1e1e1"></div>
<div class="t" style="left:472.60px;top:522.00px;font-size:13.9px;color:#5c5c5c;font-weight:normal;">Tiefe [mm]</div>
<div class="abs" style="left:489.5px;top:541px;width:627.5px;height:1px;background:#e1e1e1"></div>
<div class="t" style="left:472.60px;top:548.00px;font-size:13.9px;color:#5c5c5c;font-weight:normal;">Höhe [HE]</div>
<div class="abs" style="left:489.5px;top:567px;width:627.5px;height:1px;background:#e1e1e1"></div>
<div class="t" style="left:472.60px;top:574.00px;font-size:13.9px;color:#5c5c5c;font-weight:normal;">Ignoriert für Belegungsberechnung</div>
<div class="abs" style="left:489.5px;top:593px;width:627.5px;height:1px;background:#e1e1e1"></div>
<div class="t" style="left:472.60px;top:600.00px;font-size:13.9px;color:#5c5c5c;font-weight:normal;">Leistungsaufnahme [W]</div>
<div class="abs" style="left:489.5px;top:619px;width:627.5px;height:1px;background:#e1e1e1"></div>
<div class="t" style="left:472.60px;top:626.00px;font-size:13.9px;color:#5c5c5c;font-weight:normal;">Verlustleistung [BTU/h]</div>
<div class="abs" style="left:489.5px;top:645px;width:627.5px;height:1px;background:#e1e1e1"></div>
<div class="t" style="left:472.60px;top:652.00px;font-size:13.9px;color:#5c5c5c;font-weight:normal;">Gewicht [kg]</div>
<div class="abs" style="left:472px;top:672px;width:645px;height:1px;background:#e1e1e1"></div>
<div class="t" style="left:472.60px;top:681.00px;font-size:13.4px;color:#d93c1d;font-weight:bold;">Vorderansicht</div>
<div class="abs" style="left:489.5px;top:698px;width:627.5px;height:1px;background:#e1e1e1"></div>
<div class="t" style="left:472.60px;top:705.00px;font-size:13.9px;color:#3a3a3a;font-weight:normal;">Farbe</div>
<div class="abs" style="left:489.5px;top:724px;width:627.5px;height:1px;background:#e1e1e1"></div>
<div class="t" style="left:472.60px;top:731.00px;font-size:13.9px;color:#3a3a3a;font-weight:normal;">Horizontal zentriert</div>
<div class="abs" style="left:472px;top:750px;width:645px;height:1px;background:#e1e1e1"></div>
<div class="t" style="left:472.60px;top:759.00px;font-size:13.4px;color:#d93c1d;font-weight:bold;">Draufsicht</div>
<div class="abs" style="left:489.5px;top:776px;width:627.5px;height:1px;background:#e1e1e1"></div>
<div class="t" style="left:472.60px;top:783.00px;font-size:13.9px;color:#3a3a3a;font-weight:normal;">Icon</div>
<div class="abs" style="left:489.5px;top:802px;width:627.5px;height:1px;background:#e1e1e1"></div>
<div class="t" style="left:472.60px;top:809.00px;font-size:13.9px;color:#3a3a3a;font-weight:normal;">Icon Hintergrundfarbe</div>
<div class="abs" style="left:489.5px;top:828px;width:627.5px;height:1px;background:#e1e1e1"></div>
<div class="t" style="left:472.60px;top:835.00px;font-size:13.9px;color:#5c5c5c;font-weight:normal;">Textfarbe</div>
<div class="abs" style="left:489.5px;top:855px;width:627.5px;height:1px;background:#e1e1e1"></div>
<div class="t" style="left:472.60px;top:862.00px;font-size:13.9px;color:#3a3a3a;font-weight:normal;">Position der Überschrift</div>
<div class="abs" style="left:709px;top:777px;width:406px;height:24px;border:1px dotted #555;border-top:none"></div>
<div class="t" style="left:711.00px;top:784.00px;font-size:13.5px;color:#444;font-weight:normal;">desktop_grey</div>
<svg style="left:1103px;top:787px" width="9" height="6" viewBox="0 0 9 6"><path d="M0 0.3 H8.8 L4.4 5.5Z" fill="#666"/></svg>
<div class="abs" style="left:711px;top:805.5px;width:12px;height:18.5px;background:#dcdfe4;border:1px solid #bdbdbd"></div>
<div class="t" style="left:728.30px;top:810.00px;font-size:13.5px;color:#444;font-weight:normal;">220.224.229</div>
<div class="abs" style="left:711px;top:832px;width:13.5px;height:19.4px;background:#000;box-sizing:border-box;border:1px solid #3a3a3a"></div>
<div class="t" style="left:728.30px;top:837.00px;font-size:13.5px;color:#444;font-weight:normal;">Schwarz</div>
<div class="t" style="left:711.00px;top:863.00px;font-size:13.5px;color:#444;font-weight:normal;">Zentriert</div>
<div class="abs" style="left:0px;top:874px;width:1471px;height:34px;background:#f3f4f8;"></div>
<div class="abs" style="left:709px;top:32px;width:408px;height:746px;background:#fff;border-left:1px solid #cfcfcf;box-shadow:1px 1px 2px rgba(0,0,0,0.4)">
<div class="abs" style="left:0;top:0;width:385px;height:746px;background:#f1f2f6"></div>
<div class="t" style="left:3px;top:4px;font-size:13.5px;color:#3a3a3a">access_point_white</div>
<div class="t" style="left:3px;top:23px;font-size:13.5px;color:#3a3a3a">battery_black</div>
<div class="t" style="left:3px;top:42px;font-size:13.5px;color:#3a3a3a">battery_grey</div>
<div class="t" style="left:3px;top:61px;font-size:13.5px;color:#3a3a3a">battery_white</div>
<div class="t" style="left:3px;top:80px;font-size:13.5px;color:#3a3a3a">building_black</div>
<div class="t" style="left:3px;top:99px;font-size:13.5px;color:#3a3a3a">building_grey</div>
<div class="t" style="left:3px;top:119px;font-size:13.5px;color:#3a3a3a">building_white</div>
<div class="t" style="left:3px;top:138px;font-size:13.5px;color:#3a3a3a">campus_black</div>
<div class="t" style="left:3px;top:157px;font-size:13.5px;color:#3a3a3a">campus_grey</div>
<div class="t" style="left:3px;top:176px;font-size:13.5px;color:#3a3a3a">campus_white</div>
<div class="t" style="left:3px;top:195px;font-size:13.5px;color:#3a3a3a">coreswitch_black</div>
<div class="t" style="left:3px;top:214px;font-size:13.5px;color:#3a3a3a">coreswitch_grey</div>
<div class="t" style="left:3px;top:233px;font-size:13.5px;color:#3a3a3a">coreswitch_white</div>
<div class="t" style="left:3px;top:252px;font-size:13.5px;color:#3a3a3a">desktop_black</div>
<div class="abs" style="left:1px;top:266.96px;width:383px;height:17px;background:#0078d7;border:1px dotted #222"></div>
<div class="t" style="left:3px;top:271px;font-size:13.5px;color:#fff">desktop_grey</div>
<div class="t" style="left:3px;top:290px;font-size:13.5px;color:#3a3a3a">desktop_white</div>
<div class="t" style="left:3px;top:309px;font-size:13.5px;color:#3a3a3a">device_black</div>
<div class="t" style="left:3px;top:329px;font-size:13.5px;color:#3a3a3a">device_grey</div>
<div class="t" style="left:3px;top:348px;font-size:13.5px;color:#3a3a3a">device_white</div>
<div class="t" style="left:3px;top:367px;font-size:13.5px;color:#3a3a3a">firewall_black</div>
<div class="t" style="left:3px;top:386px;font-size:13.5px;color:#3a3a3a">firewall_grey</div>
<div class="t" style="left:3px;top:405px;font-size:13.5px;color:#3a3a3a">firewall_white</div>
<div class="t" style="left:3px;top:424px;font-size:13.5px;color:#3a3a3a">floor_black</div>
<div class="t" style="left:3px;top:443px;font-size:13.5px;color:#3a3a3a">floor_grey</div>
<div class="t" style="left:3px;top:462px;font-size:13.5px;color:#3a3a3a">floor_pod_black</div>
<div class="t" style="left:3px;top:481px;font-size:13.5px;color:#3a3a3a">floor_pod_grey</div>
<div class="t" style="left:3px;top:500px;font-size:13.5px;color:#3a3a3a">floor_pod_white</div>
<div class="t" style="left:3px;top:519px;font-size:13.5px;color:#3a3a3a">floor_white</div>
<div class="t" style="left:3px;top:539px;font-size:13.5px;color:#3a3a3a">junction_box_black</div>
<div class="t" style="left:3px;top:558px;font-size:13.5px;color:#3a3a3a">junction_box_grey</div>
<div class="t" style="left:3px;top:577px;font-size:13.5px;color:#3a3a3a">junction_box_white</div>
<div class="t" style="left:3px;top:596px;font-size:13.5px;color:#3a3a3a">media_converter_black</div>
<div class="t" style="left:3px;top:615px;font-size:13.5px;color:#3a3a3a">media_converter_grey</div>
<div class="t" style="left:3px;top:634px;font-size:13.5px;color:#3a3a3a">media_converter_white</div>
<div class="t" style="left:3px;top:653px;font-size:13.5px;color:#3a3a3a">multiplexer_black</div>
<div class="t" style="left:3px;top:672px;font-size:13.5px;color:#3a3a3a">multiplexer_grey</div>
<div class="t" style="left:3px;top:691px;font-size:13.5px;color:#3a3a3a">multiplexer_white</div>
<div class="t" style="left:3px;top:710px;font-size:13.5px;color:#3a3a3a">network_socket_01_black</div>
<div class="t" style="left:3px;top:729px;font-size:13.5px;color:#3a3a3a">network_socket_01_grey</div>
<div class="abs" style="left:391px;top:32.6px;width:8px;height:156.4px;background:#bababa"></div>
<div class="abs" style="left:406px;top:4px;width:2px;height:742px;background:#7a7a7a"></div>
<div class="abs" style="left:6px;top:745px;width:402px;height:1.5px;background:#7a7a7a"></div>
</div>
<div class="abs" style="left:1124px;top:127px;width:8px;height:728px;background:#bbbbbb;"></div>
<div class="abs" style="left:1145.5px;top:536.0px;width:1.5px;height:1px;background:#9a9a9a;"></div>
<div class="abs" style="left:1145.5px;top:538.4px;width:1.5px;height:1px;background:#9a9a9a;"></div>
<div class="abs" style="left:1145.5px;top:540.8px;width:1.5px;height:1px;background:#9a9a9a;"></div>
<div class="abs" style="left:1145.5px;top:543.2px;width:1.5px;height:1px;background:#9a9a9a;"></div>
<div class="abs" style="left:1145.5px;top:545.6px;width:1.5px;height:1px;background:#9a9a9a;"></div>
<div class="abs" style="left:1145.5px;top:548.0px;width:1.5px;height:1px;background:#9a9a9a;"></div>
<div class="abs" style="left:1145.5px;top:550.4px;width:1.5px;height:1px;background:#9a9a9a;"></div>
<div class="abs" style="left:1145.5px;top:552.8px;width:1.5px;height:1px;background:#9a9a9a;"></div>
<div class="abs" style="left:1118px;top:76px;width:318px;height:798px;overflow:hidden">
<div class="t" style="left:48.60px;top:31px;font-size:18.6px;color:#e2361e">Designer</div>
<div class="abs" style="left:132.5px;top:32px;width:1px;height:12.5px;background:#cfcfcf"></div>
<div class="t" style="left:145.90px;top:31px;font-size:18.6px;color:#a3a3a3">Ports</div>
<div class="abs" style="left:197px;top:32px;width:1px;height:12.5px;background:#cfcfcf"></div>
<div class="t" style="left:210.30px;top:31px;font-size:18.6px;color:#a3a3a3">Slots</div>
<div class="abs" style="left:259.4000000000001px;top:32px;width:1px;height:12.5px;background:#cfcfcf"></div>
<div class="t" style="left:272.40px;top:31px;font-size:18.6px;color:#a3a3a3">Slotrahmen</div>
<div class="abs" style="left:50px;top:67px;width:300px;height:176px">
<div class="abs" style="left:0;top:0;width:9px;height:175.5px;background:linear-gradient(90deg,#b4b5b9,#c4c5c9)"></div>
<div class="abs" style="left:9px;top:173px;width:300px;height:2.5px;background:#b9babd"></div>
<div class="abs" style="left:9px;top:0;width:300px;height:16.5px;background:linear-gradient(180deg,#93b7e2,#84a8d2 80%,#6f87a8)"></div>
<div class="t" style="left:13.5px;top:3px;font-size:12.4px;color:#fff">Standard-PC</div>
<div class="abs" style="left:9px;top:16.5px;width:300px;height:78px;background:linear-gradient(180deg,#e6eef8,#dde7f3)"></div>
<div class="abs" style="left:9px;top:94.5px;width:300px;height:1.5px;background:#fff"></div>
<div class="abs" style="left:10px;top:96px;width:300px;height:75px;background:linear-gradient(180deg,#dcdcdc,#cacaca)"></div>
<div class="abs" style="left:9px;top:171px;width:300px;height:2px;background:#fff"></div>
<div class="abs" style="left:76.40000000000009px;top:27.400000000000006px;width:122px;height:9.5px;background:linear-gradient(180deg,#f0f0f0,#e0e0e0);border:1px solid #bcbcbc;box-sizing:border-box;color:#c4c4c4;font-size:5.5px;line-height:7.5px;text-align:center;white-space:nowrap">Media Bay</div>
<div class="abs" style="left:38.200000000000045px;top:43.5px;width:97px;height:10.5px;background:linear-gradient(180deg,#f0f0f0,#e0e0e0);border:1px solid #bcbcbc;box-sizing:border-box;color:#c4c4c4;font-size:6.5px;line-height:8.5px;text-align:center;white-space:nowrap">HDD 1</div>
<div class="abs" style="left:138px;top:43.5px;width:97px;height:10.5px;background:linear-gradient(180deg,#f0f0f0,#e0e0e0);border:1px solid #bcbcbc;box-sizing:border-box;color:#c4c4c4;font-size:6.5px;line-height:8.5px;text-align:center;white-space:nowrap">HDD 2</div>
<div class="abs" style="left:38.200000000000045px;top:59.599999999999994px;width:97px;height:10.5px;background:linear-gradient(180deg,#f0f0f0,#e0e0e0);border:1px solid #bcbcbc;box-sizing:border-box;color:#c4c4c4;font-size:6.5px;line-height:8.5px;text-align:center;white-space:nowrap">HDD 3</div>
<div class="abs" style="left:138px;top:59.599999999999994px;width:97px;height:10.5px;background:linear-gradient(180deg,#f0f0f0,#e0e0e0);border:1px solid #bcbcbc;box-sizing:border-box;color:#c4c4c4;font-size:6.5px;line-height:8.5px;text-align:center;white-space:nowrap">HDD 4</div>
<div class="abs" style="left:38.200000000000045px;top:76.4px;width:97px;height:10.5px;background:linear-gradient(180deg,#f0f0f0,#e0e0e0);border:1px solid #bcbcbc;box-sizing:border-box;color:#c4c4c4;font-size:6.5px;line-height:8.5px;text-align:center;white-space:nowrap">HDD 5</div>
<div class="abs" style="left:138px;top:76.4px;width:97px;height:10.5px;background:linear-gradient(180deg,#f0f0f0,#e0e0e0);border:1px solid #bcbcbc;box-sizing:border-box;color:#c4c4c4;font-size:6.5px;line-height:8.5px;text-align:center;white-space:nowrap">HDD 6</div>
<div class="t" style="left:33px;top:138px;font-size:7.5px;color:#333;transform:rotate(0deg);transform-origin:0 100%">Mouse</div>
<div class="t" style="left:27px;top:167.5px;font-size:7.5px;color:#333;transform:rotate(0deg);transform-origin:0 100%">Keyboard</div>
<div class="t" style="left:62.299999999999955px;top:150.5px;font-size:8px;color:#333;transform:rotate(-45deg);transform-origin:0 100%">Console 2</div>
<div class="t" style="left:78.90000000000009px;top:149.89999999999998px;font-size:8px;color:#333;transform:rotate(-45deg);transform-origin:0 100%">MGMT</div>
<div class="t" style="left:133.5999999999999px;top:147.5px;font-size:8px;color:#333;transform:rotate(-45deg);transform-origin:0 100%">VGA</div>
<div class="t" style="left:170.5999999999999px;top:152.8px;font-size:8px;color:#333;transform:rotate(-45deg);transform-origin:0 100%">USB 2</div>
<div class="t" style="left:190.5px;top:152.8px;font-size:8px;color:#333;transform:rotate(-45deg);transform-origin:0 100%">USB 3</div>
<div class="abs" style="left:41.600000000000136px;top:146.39999999999998px;width:7.2px;height:7.2px;border-radius:50%;background:#34509e;box-shadow:inset 0 0 0 0.8px #1e2c60"></div>
<div class="abs" style="left:41.600000000000136px;top:160.2px;width:7.2px;height:7.2px;border-radius:50%;background:#34509e;box-shadow:inset 0 0 0 0.8px #1e2c60"></div>
<svg style="left:60.700000000000045px;top:158.60000000000002px" width="10" height="8" viewBox="0 0 10 8"><path d="M0 0 H9.1 V4 Q9.1 7.1 6 7.1 H3.1 Q0 7.1 0 4 Z" fill="#34509e"/><rect x="1.6" y="1.2" width="6" height="1.4" fill="#8fa3d8"/></svg>
<svg style="left:77.5px;top:158.60000000000002px" width="10" height="8" viewBox="0 0 10 8"><path d="M0 7.1 H9.7 V3.5 Q9.7 0 6.2 0 H3.5 Q0 0 0 3.5 Z" fill="#34509e"/><rect x="1.6" y="4.5" width="6.5" height="1.6" fill="#8fa3d8"/></svg>
<div class="abs" style="left:125.29999999999995px;top:156.7px;width:22.7px;height:10.3px;background:#f4f4f4;border:1px solid #444;border-top-color:#aaa;box-sizing:border-box;border-radius:2px"></div>
<div class="abs" style="left:130.5px;top:159px;width:12.3px;height:6px;background:#5b70c0;border-radius:1px 1px 3px 3px"></div>
<div class="abs" style="left:169.9000000000001px;top:161.89999999999998px;width:8.4px;height:5px;background:#2b2b2b;box-shadow:inset 0 2px 0 -1px #666"></div>
<div class="abs" style="left:189.9000000000001px;top:161.89999999999998px;width:8.4px;height:5px;background:#2b2b2b;box-shadow:inset 0 2px 0 -1px #666"></div>
</div>
</div>
</body></html>
